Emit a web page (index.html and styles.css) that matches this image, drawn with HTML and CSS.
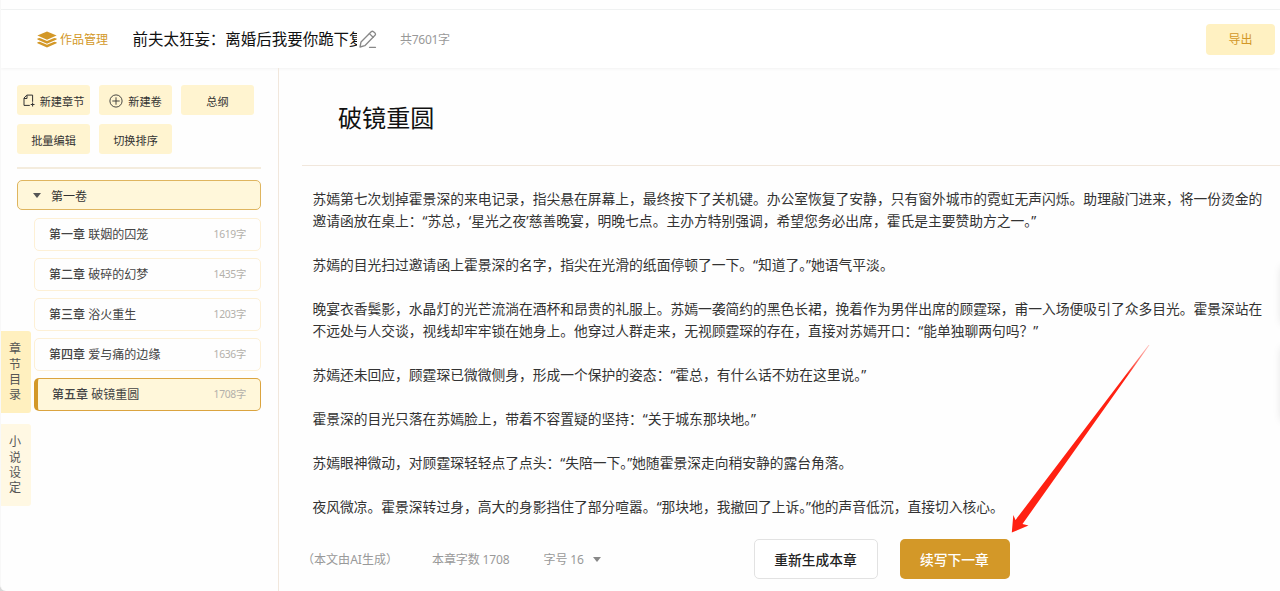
FILE: index.html
```html
<!DOCTYPE html>
<html lang="zh-CN">
<head>
<meta charset="UTF-8" />
<title>作品管理</title>
<link rel="stylesheet" href="styles.css">
</head>
<body>
<div class="app">
  <div class="topline"></div>
  <header class="header">
    <a class="works">
      <svg width="20" height="17" viewBox="0 0 20 17">
        <path d="M10 0.4 19.6 4.6 10 8.8 0.4 4.6Z" fill="#d39828"/>
        <path d="M0.4 7.4 2.8 6.9 10 10 17.2 6.9 19.6 7.4V8.4L10 12.8 0.4 8.4Z" fill="#d39828"/>
        <path d="M0.4 11.2 2.8 10.7 10 13.8 17.2 10.7 19.6 11.2V12.2L10 16.6 0.4 12.2Z" fill="#d39828"/>
      </svg>
      <span>作品管理</span>
    </a>
    <div class="book-title">前夫太狂妄：离婚后我要你跪下复</div>
    <svg class="edit" width="18" height="19" viewBox="0 0 18 19" fill="none" stroke="#888" stroke-width="1.3" stroke-linejoin="round" stroke-linecap="round">
      <path d="M1 17 2 12 12.2 1.7Q13.3 0.7 14.5 1.7L16 3.1Q17 4.2 16 5.3L5.8 15.7Z"/>
      <path d="M10.4 3.6 14.1 7.2M10.5 17.3H16.5"/>
    </svg>
    <span class="total">共7601字</span>
    <button class="export">导出</button>
  </header>

  <div class="main">
    <aside class="sidebar">
      <div class="tools">
        <button>
          <svg width="12" height="13" viewBox="0 0 12 13" fill="none" stroke="#333" stroke-width="1">
            <path d="M6.8 11.4H1V4L3.8 1.1H9.6V7.8M1 4.5H4V1.3M9.6 8.5V12.5M7.7 10.5H11.5"/>
          </svg>
          <span>新建章节</span>
        </button>
        <button>
          <svg width="14" height="14" viewBox="0 0 14 14" fill="none" stroke="#333" stroke-width="0.9">
            <circle cx="7" cy="7" r="6.1"/>
            <path d="M7 3.3V10.7M3.3 7H10.7"/>
          </svg>
          <span>新建卷</span>
        </button>
        <button>总纲</button>
        <button>批量编辑</button>
        <button>切换排序</button>
      </div>
      <div class="volume"><i class="caret"></i>第一卷</div>
      <ul class="chapters">
        <li><b>第一章</b> 联姻的囚笼<span>1619字</span></li>
        <li><b>第二章</b> 破碎的幻梦<span>1435字</span></li>
        <li><b>第三章</b> 浴火重生<span>1203字</span></li>
        <li><b>第四章</b> 爱与痛的边缘<span>1636字</span></li>
        <li class="active"><b>第五章</b> 破镜重圆<span>1708字</span></li>
      </ul>
    </aside>

    <section class="editor">
      <h1>破镜重圆</h1>
      <div class="content">
        <p>苏嫣第七次划掉霍景深的来电记录，指尖悬在屏幕上，最终按下了关机键。办公室恢复了安静，只有窗外城市的霓虹无声闪烁。助理敲门进来，将一份烫金的邀请函放在桌上：“苏总，‘星光之夜’慈善晚宴，明晚七点。主办方特别强调，希望您务必出席，霍氏是主要赞助方之一。”</p>
        <p>苏嫣的目光扫过邀请函上霍景深的名字，指尖在光滑的纸面停顿了一下。“知道了。”她语气平淡。</p>
        <p>晚宴衣香鬓影，水晶灯的光芒流淌在酒杯和昂贵的礼服上。苏嫣一袭简约的黑色长裙，挽着作为男伴出席的顾霆琛，甫一入场便吸引了众多目光。霍景深站在不远处与人交谈，视线却牢牢锁在她身上。他穿过人群走来，无视顾霆琛的存在，直接对苏嫣开口：“能单独聊两句吗？”</p>
        <p>苏嫣还未回应，顾霆琛已微微侧身，形成一个保护的姿态：“霍总，有什么话不妨在这里说。”</p>
        <p>霍景深的目光只落在苏嫣脸上，带着不容置疑的坚持：“关于城东那块地。”</p>
        <p>苏嫣眼神微动，对顾霆琛轻轻点了点头：“失陪一下。”她随霍景深走向稍安静的露台角落。</p>
        <p>夜风微凉。霍景深转过身，高大的身影挡住了部分喧嚣。“那块地，我撤回了上诉。”他的声音低沉，直接切入核心。</p>
      </div>
      <footer class="footer">
        <span class="ai-note">（本文由AI生成）</span>
        <span class="count">本章字数 1708</span>
        <span class="size">字号 16<i class="caret"></i></span>
        <button class="redo">重新生成本章</button>
        <button class="next">续写下一章</button>
      </footer>
    </section>
  </div>

  <nav class="side-tabs">
    <div class="tab on">章节目录</div>
    <div class="tab">小说设定</div>
  </nav>

  <div class="float-shadow first"></div>
  <div class="float-shadow second"></div>

  <svg class="arrow" width="142" height="192" viewBox="0 0 142 192">
    <defs>
      <linearGradient id="tail" gradientUnits="userSpaceOnUse" x1="140" y1="0" x2="118" y2="31">
        <stop offset="0" stop-color="#ff2112" stop-opacity="0.25"/>
        <stop offset="1" stop-color="#ff2112"/>
      </linearGradient>
    </defs>
    <path d="M139.5 0 6.5 175 4.3 170 2.8 187.5 19.5 180.5 13.5 179 140.5 0Z" fill="url(#tail)"/>
  </svg>
</div>
</body>
</html>
```
FILE: styles.css
```css
* {
  box-sizing: border-box;
}

body {
  margin: 0;
  background: #d8d8d8;
  color: #333;
  font-family: 'Noto Sans', 'Noto Sans CJK SC', sans-serif;
  font-size: 12.04px;
}

button {
  border: none;
  padding: 0;
  font-family: inherit;
  cursor: pointer;
}

svg {
  flex: none;
}

.app {
  position: relative;
  display: flex;
  flex-direction: column;
  height: 591px;
  overflow: hidden;
  background: #fefefe;
  border-left: 1px solid #f8f8f8;
  border-bottom-left-radius: 6px;
}

.topline {
  height: 10px;
  border-bottom: 1px solid #f1f3f3;
}

.header {
  display: flex;
  align-items: center;
  height: 58px;
  padding: 0 5px 0 36px;
  background: #fff;
  box-shadow: 0 1px 3px rgba(0, 0, 0, 0.05);
}

.works {
  display: flex;
  align-items: center;
  gap: 3px;
  width: 95.5px;
  color: #d39828;
}

.book-title {
  width: 224.5px;
  padding-bottom: 2px;
  overflow: hidden;
  white-space: nowrap;
  font-size: 15.48px;
  color: #111;
}

.edit {
  margin-left: 2px;
}

.total {
  margin-left: 23px;
  color: #999;
  letter-spacing: -0.3px;
}

.export {
  width: 69px;
  height: 31px;
  margin-left: auto;
  border-radius: 4px;
  background: #fff1c2;
  color: #d39828;
  font-size: 12.04px;
}

.main {
  display: flex;
  flex: 1;
  min-height: 0;
}

.sidebar {
  width: 278px;
  padding: 17px 17px 0 16px;
  border-right: 1px solid #f1e7dc;
}

.tools {
  display: flex;
  flex-wrap: wrap;
  gap: 9px;
  padding-bottom: 13px;
  width: 244px;
  border-bottom: 2px solid #f4ecdd;
}

.tools button {
  display: flex;
  align-items: center;
  justify-content: center;
  gap: 5px;
  width: 73px;
  height: 30px;
  padding-top: 1px;
  border-radius: 3px;
  background: #fff4d0;
  color: #333;
  font-size: 11.18px;
}

.caret {
  display: inline-block;
  border: 4px solid transparent;
  border-top: 5px solid #555;
  border-bottom: 0;
}

.volume {
  display: flex;
  align-items: center;
  gap: 10px;
  width: 244px;
  height: 30px;
  margin-top: 11px;
  padding: 1px 0 0 15px;
  border: 1px solid #dfb55f;
  border-radius: 5px;
  background: #fff7da;
}

.chapters {
  display: flex;
  flex-direction: column;
  gap: 7px;
  width: 227px;
  margin: 8px 0 0 17px;
  padding: 0;
  list-style: none;
}

.chapters li {
  display: flex;
  align-items: center;
  height: 33px;
  padding: 0 14px 2px;
  border: 1px solid #fdf0d5;
  border-radius: 5px;
  color: #444;
  white-space: pre;
}

.chapters b {
  font-weight: 500;
}

.chapters span {
  margin-left: auto;
  color: #b3b0aa;
  font-size: 10.32px;
  letter-spacing: -0.3px;
}

.chapters .active {
  border-color: #dba43f;
  border-left: 4px solid #d39828;
  background: #fff7da;
}

.editor {
  display: flex;
  flex: 1;
  flex-direction: column;
  min-width: 0;
  padding-left: 23px;
}

h1 {
  height: 98px;
  margin: 0;
  padding-left: 36px;
  border-bottom: 1px solid #f1e7dc;
  color: #111;
  font-size: 24.08px;
  font-weight: 400;
  line-height: 100px;
}

.content {
  height: 361px;
  padding: 22px 11px 0 10.5px;
  font-size: 13.77px;
  line-height: 22px;
}

.content p {
  margin: 0 0 22px;
}

.footer {
  display: flex;
  align-items: center;
  height: 64px;
  color: #999;
}

.ai-note {
  width: 130px;
}

.count {
  width: 111.5px;
  letter-spacing: -0.15px;
}

.size {
  display: flex;
  align-items: center;
  gap: 9px;
  width: 210px;
  letter-spacing: -0.15px;
}

.size .caret {
  border-top-color: #888;
}

.redo,
.next {
  height: 40px;
  border-radius: 5px;
  font-size: 13.76px;
  font-weight: 500;
}

.redo {
  width: 124px;
  border: 1px solid #e2e2e2;
  background: #fff;
  color: #222;
}

.next {
  width: 110px;
  margin-left: 22px;
  background: #d39828;
  color: #fff;
}

/* vertical tabs laid over the left edge of the sidebar */
.side-tabs {
  position: absolute;
  top: 331px;
  left: -1px;
}

.tab {
  display: flex;
  align-items: center;
  width: 31px;
  height: 82px;
  margin-bottom: 11px;
  padding: 0 9px;
  border-radius: 0 3px 3px 0;
  background: #fff8e3;
  color: #555;
  line-height: 15.4px;
  word-break: break-all;
}

.tab.on {
  background: #fff0bf;
}

.float-shadow {
  position: absolute;
  left: 1281px;
  width: 30px;
  box-shadow: 0 0 10px rgba(0, 0, 0, 0.14);
}

.float-shadow.first {
  top: 267px;
  height: 56px;
}

.float-shadow.second {
  top: 348px;
  height: 72px;
}

.arrow {
  position: absolute;
  top: 345px;
  left: 1008px;
}
```
